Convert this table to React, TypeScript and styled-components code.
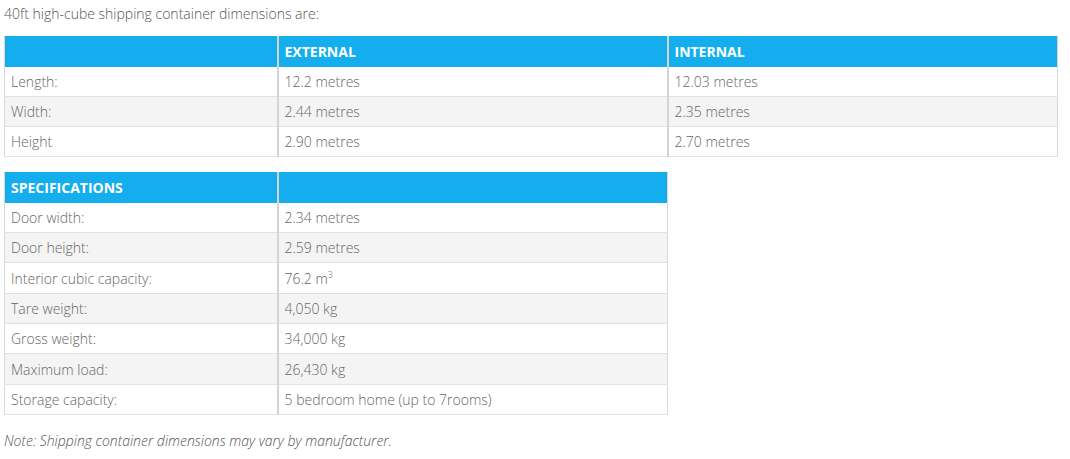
import React from "react";
import styled, { createGlobalStyle } from "styled-components";

const GlobalStyle = createGlobalStyle`
  body {
    margin: 0;
    background: #fff;
    font-family: "Open Sans", "Liberation Sans", sans-serif;
  }
`;

const Page = styled.div`
  padding: 4px 4px 0;
  color: #666;
  font-size: 14px;
`;

const Intro = styled.p`
  margin: 0 0 12px;
  line-height: 20px;
  font-weight: 300;
  color: #555;
`;

interface TableProps {
  $width: number;
  $spaced?: boolean;
}

const Table = styled.table<TableProps>`
  width: ${(p) => p.$width}px;
  border-collapse: collapse;
  table-layout: fixed;
  margin-top: ${(p) => (p.$spaced ? "15px" : "0")};
  border-left: 1px solid #d8d8d8;
  border-right: 1px solid #d8d8d8;
`;

const Th = styled.th`
  height: 30.5px;
  padding: 0 6px;
  background: #14aeef;
  color: #fff;
  font-weight: 700;
  font-size: 14px;
  text-align: left;
  border-left: 2px solid #d4d4d4;
  &:first-child {
    border-left: none;
  }
`;

interface RowProps {
  $striped?: boolean;
}

const Row = styled.tr<RowProps>`
  background: ${(p) => (p.$striped ? "#f4f4f4" : "#fff")};
  border-bottom: 1px solid #e2e2e2;
`;

const Td = styled.td`
  height: 29.3px;
  padding: 0 6px;
  font-weight: 300;
  color: #666;
  border-left: 2px solid #d4d4d4;
  &:first-child {
    border-left: none;
  }
`;

const Sup = styled.sup`
  font-size: 9px;
  vertical-align: 6px;
  line-height: 0;
`;

const Note = styled.p`
  margin: 16px 0 0;
  font-style: italic;
  font-weight: 300;
  color: #555;
  line-height: 20px;
`;

const dimensions = [
  ["Length:", "12.2 metres", "12.03 metres"],
  ["Width:", "2.44 metres", "2.35 metres"],
  ["Height", "2.90 metres", "2.70 metres"],
];

const specs: [string, React.ReactNode][] = [
  ["Door width:", "2.34 metres"],
  ["Door height:", "2.59 metres"],
  [
    "Interior cubic capacity:",
    <>
      76.2 m<Sup>3</Sup>
    </>,
  ],
  ["Tare weight:", "4,050 kg"],
  ["Gross weight:", "34,000 kg"],
  ["Maximum load:", "26,430 kg"],
  ["Storage capacity:", "5 bedroom home (up to 7rooms)"],
];

const App = () => {
  return (
    <Page>
      <GlobalStyle />
      <Intro>40ft high-cube shipping container dimensions are:</Intro>
      <Table $width={1053}>
        <colgroup>
          <col style={{ width: 273 }} />
          <col style={{ width: 390 }} />
          <col style={{ width: 390 }} />
        </colgroup>
        <thead>
          <tr>
            <Th></Th>
            <Th>EXTERNAL</Th>
            <Th>INTERNAL</Th>
          </tr>
        </thead>
        <tbody>
          {dimensions.map((row, i) => (
            <Row key={i} $striped={i % 2 === 1}>
              {row.map((cell, j) => (
                <Td key={j}>{cell}</Td>
              ))}
            </Row>
          ))}
        </tbody>
      </Table>
      <Table $width={663} $spaced>
        <colgroup>
          <col style={{ width: 273 }} />
          <col style={{ width: 390 }} />
        </colgroup>
        <thead>
          <tr>
            <Th>SPECIFICATIONS</Th>
            <Th></Th>
          </tr>
        </thead>
        <tbody>
          {specs.map(([label, value], i) => (
            <Row key={i} $striped={i % 2 === 1}>
              <Td>{label}</Td>
              <Td>{value}</Td>
            </Row>
          ))}
        </tbody>
      </Table>
      <Note>Note: Shipping container dimensions may vary by manufacturer.</Note>
    </Page>
  );
};

export default App;
